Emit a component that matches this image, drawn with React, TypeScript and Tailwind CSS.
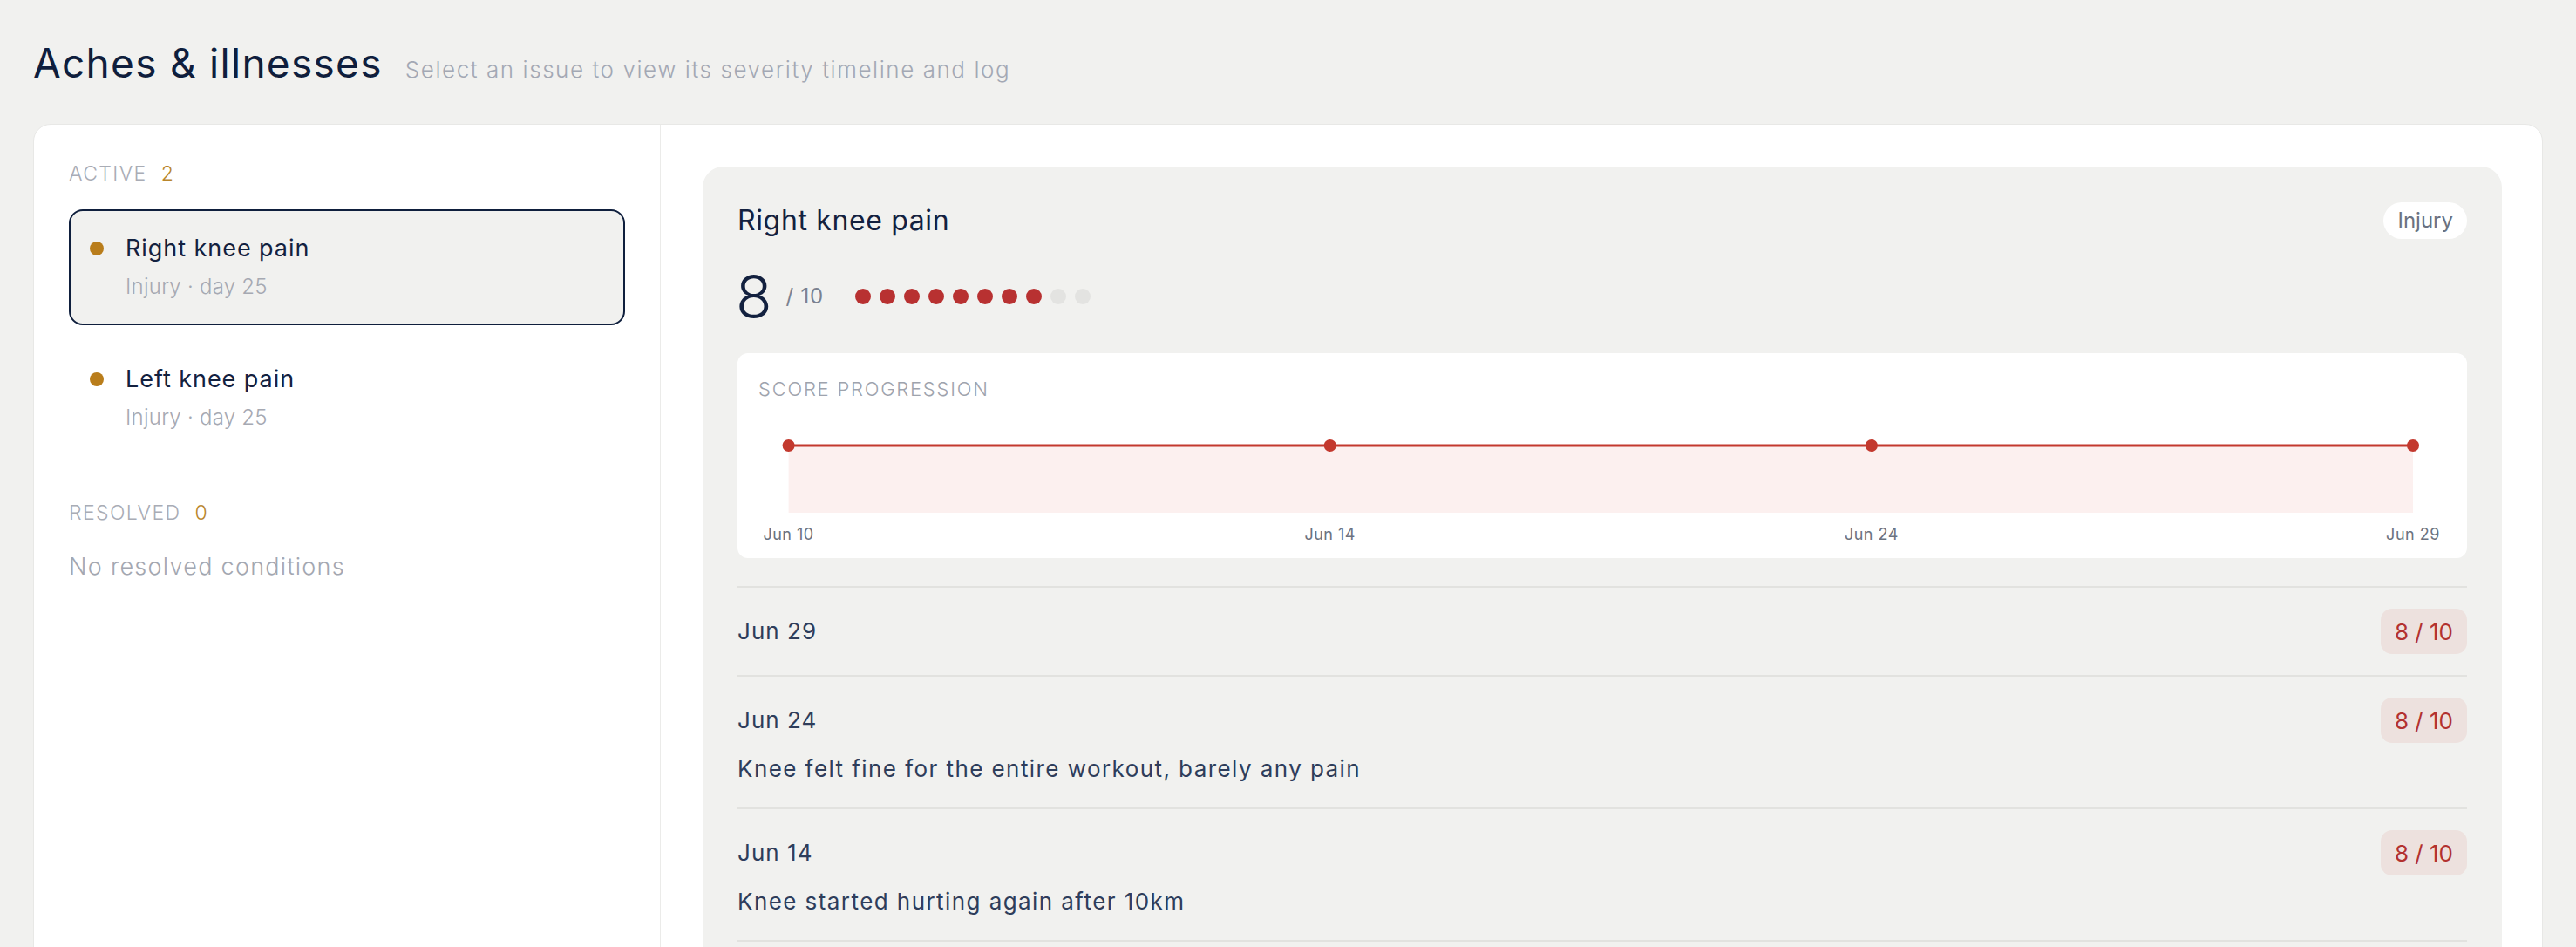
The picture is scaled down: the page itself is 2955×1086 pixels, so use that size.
import React from "react";

type Issue = { name: string; kind: string; day: number };
type Entry = { date: string; score: number; note: string };

const active: Issue[] = [
  { name: "Right knee pain", kind: "Injury", day: 25 },
  { name: "Left knee pain", kind: "Injury", day: 25 },
];

const progression = [
  { date: "Jun 10", score: 8 },
  { date: "Jun 14", score: 8 },
  { date: "Jun 24", score: 8 },
  { date: "Jun 29", score: 8 },
];

const entries: Entry[] = [
  { date: "Jun 29", score: 8, note: "" },
  { date: "Jun 24", score: 8, note: "Knee felt fine for the entire workout, barely any pain" },
  { date: "Jun 14", score: 8, note: "Knee started hurting again after 10km" },
  { date: "Jun 10", score: 8, note: "Sharp pain on the outside of the knee during the long run" },
];

function SectionLabel({ label, count }: { label: string; count: number }) {
  return (
    <div className="flex items-center text-[23px] leading-[32px] font-light">
      <span className="tracking-[0.06em] text-[#a9acb5]">{label}</span>
      <span className="ml-[16px] text-[#b9862c]">{count}</span>
    </div>
  );
}

function IssueItem({ issue, selected }: { issue: Issue; selected: boolean }) {
  return (
    <div
      className={
        selected
          ? "rounded-[16px] border-2 border-[#0f1f3d] bg-[#f1f1ef] pl-[22px] pr-6 pt-6 pb-[25px]"
          : "rounded-[16px] border-2 border-transparent pl-[22px] pr-6 pt-6 pb-[25px]"
      }
    >
      <div className="flex items-center h-[38px]">
        <span className="w-4 h-4 rounded-full bg-[#b97d1b] shrink-0" />
        <span className="ml-[25px] text-[27px] leading-[38px] tracking-[0.035em] text-[#13213f]">{issue.name}</span>
      </div>
      <div className="mt-2 pl-[41px] text-[24px] leading-[34px] font-light tracking-[0.01em] text-[#a6a9b2]">
        {issue.kind} · day {issue.day}
      </div>
    </div>
  );
}

function ScoreDots({ score }: { score: number }) {
  const dots = Array.from({ length: 10 }, (_, i) => i < score);
  return (
    <div className="flex items-center gap-[10px]">
      {dots.map((on, i) => (
        <span
          key={i}
          className={on ? "w-[18px] h-[18px] rounded-full bg-[#b83131]" : "w-[18px] h-[18px] rounded-full bg-[#e3e3e1]"}
        />
      ))}
    </div>
  );
}

function ProgressionChart() {
  const width = 1936;
  const height = 163;
  const x0 = 34.6;
  const x1 = 1898;
  const base = 125;
  const span = 96.25;
  const pts = progression.map((p, i) => ({
    x: x0 + (i * (x1 - x0)) / (progression.length - 1),
    y: base - (p.score / 10) * span,
    date: p.date,
  }));
  const line = pts.map((p, i) => `${i === 0 ? "M" : "L"}${p.x},${p.y}`).join(" ");
  const area =
    `M${pts[0].x},${base} ` + pts.map((p) => `L${p.x},${p.y}`).join(" ") + ` L${pts[pts.length - 1].x},${base} Z`;
  return (
    <svg width={width} height={height} viewBox={`0 0 ${width} ${height}`} className="block">
      <path d={area} fill="#fcf0ef" />
      <path d={line} fill="none" stroke="#c3392e" strokeWidth={3} />
      {pts.map((p) => (
        <circle key={p.date} cx={p.x} cy={p.y} r={7} fill="#c3392e" />
      ))}
      {pts.map((p) => (
        <text
          key={p.date + "-label"}
          x={p.x}
          y={156}
          textAnchor="middle"
          fontSize={18}
          letterSpacing={0.5}
          fill="#6b7280"
          fontFamily="Inter, sans-serif"
        >
          {p.date}
        </text>
      ))}
    </svg>
  );
}

function LogRow({ entry }: { entry: Entry }) {
  return (
    <div className="border-t-2 border-[#e2e2df] py-6">
      <div className="flex items-center justify-between h-[52px]">
        <span className="text-[26px] leading-[40px] tracking-[0.04em] text-[#2e3d5b]">{entry.date}</span>
        <span className="h-[52px] w-[99px] rounded-[13px] bg-[#ede1de] flex items-center justify-center text-[26px] text-[#b3312f]">
          {entry.score} / 10
        </span>
      </div>
      {entry.note && (
        <div className="mt-[10px] text-[26px] leading-[40px] tracking-[0.055em] text-[#2e3d5b]">{entry.note}</div>
      )}
    </div>
  );
}

export default function App() {
  return (
    <div className="min-h-screen bg-[#f1f1ef] px-[38px] pt-[44px] [font-family:Inter,'Noto_Sans',sans-serif]">
      <header className="flex items-baseline gap-[26px]">
        <h1 className="text-[46px] leading-[56px] font-normal tracking-[0.028em] text-[#0f1e3d]">Aches &amp; illnesses</h1>
        <p className="text-[26px] font-light tracking-[0.06em] text-[#a3a8b4]">
          Select an issue to view its severity timeline and log
        </p>
      </header>

      <div className="mt-[42px] flex rounded-[20px] border border-[#e8e8e6] bg-white">
        <aside className="w-[719px] shrink-0 border-r border-[#ebebe9] px-10 pt-10">
          <SectionLabel label="ACTIVE" count={2} />
          <div className="mt-[25px] flex flex-col gap-[17px]">
            {active.map((issue, i) => (
              <IssueItem key={issue.name} issue={issue} selected={i === 0} />
            ))}
          </div>
          <div className="mt-[49px]">
            <SectionLabel label="RESOLVED" count={0} />
          </div>
          <p className="mt-[27px] text-[27px] leading-[38px] font-light tracking-[0.047em] text-[#a3a7b1]">
            No resolved conditions
          </p>
        </aside>

        <main className="flex-1 p-12">
          <section className="rounded-[24px] bg-[#f1f1ef] px-10 pt-10 pb-8">
            <div className="flex items-center justify-between h-[44px]">
              <h2 className="text-[32px] leading-[44px] font-normal tracking-[0.02em] text-[#13213f]">Right knee pain</h2>
              <span className="h-[42px] px-4 rounded-full bg-white flex items-center text-[24px] text-[#6b7280]">
                Injury
              </span>
            </div>

            <div className="mt-[29px] flex items-center h-[72px]">
              <span className="-ml-[2px] text-[68px] leading-[72px] font-light text-[#13213f]">8</span>
              <span className="ml-[16px] text-[24px] tracking-[0.03em] text-[#7b8190]">/ 10</span>
              <div className="ml-[36px]">
                <ScoreDots score={8} />
              </div>
            </div>

            <div className="mt-[29px] rounded-[12px] bg-white pt-6 px-6 pb-[14px]">
              <div className="text-[22px] leading-[34px] font-light tracking-[0.08em] text-[#9ea3ad]">
                SCORE PROGRESSION
              </div>
              <ProgressionChart />
            </div>

            <div className="mt-8">
              {entries.map((e) => (
                <LogRow key={e.date} entry={e} />
              ))}
            </div>
          </section>
        </main>
      </div>
    </div>
  );
}
